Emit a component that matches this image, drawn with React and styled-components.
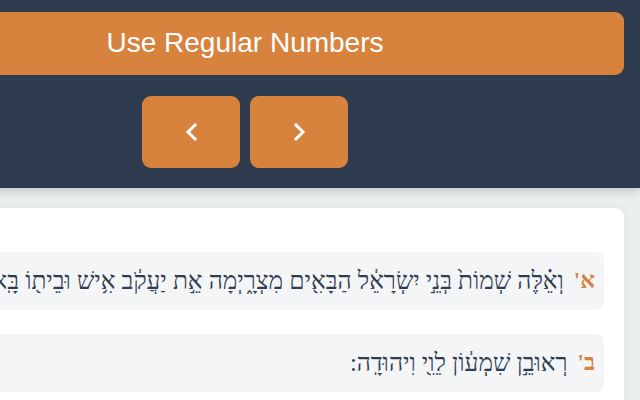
import React from 'react'
import styled, { createGlobalStyle } from 'styled-components'

const GlobalStyle = createGlobalStyle`
    html, body {
        margin: 0;
        padding: 0;
        direction: rtl;
        background: #eceff0;
        overflow: hidden;
    }
`

const Page = styled.div`
    width: 790px;
    height: 400px;
    overflow: hidden;
    background: #eceff0;
`

const Header = styled.header`
    background: #2f3c4f;
    padding: 12px 16px 20px;
    box-shadow: 0 3px 10px rgba(0, 0, 0, 0.18);
    position: relative;
`

const ModeButton = styled.button`
    display: block;
    width: 100%;
    height: 63px;
    border: none;
    border-radius: 9px;
    background: #d8833d;
    color: #fff;
    font-family: "Liberation Sans", Arial, sans-serif;
    font-size: 28px;
    direction: ltr;
    padding: 0 0 2px 0;
    cursor: pointer;
`

const Nav = styled.div`
    display: flex;
    justify-content: center;
    gap: 10px;
    margin-top: 21px;
`

const NavButton = styled.button`
    width: 98px;
    height: 72px;
    border: none;
    border-radius: 9px;
    background: #d8833d;
    display: flex;
    align-items: center;
    justify-content: center;
    cursor: pointer;
`

const Main = styled.main`
    padding: 20px 16px;
`

const Card = styled.section`
    background: #fff;
    border-radius: 9px;
    box-shadow: 0 0 12px rgba(0, 0, 0, 0.06);
    padding: 44px 20px 20px;
    display: flex;
    flex-direction: column;
    gap: 24px;
`

const Verse = styled.div`
    background: #f4f5f7;
    border-radius: 8px;
    height: 58px;
    padding: 0 9px;
    display: flex;
    align-items: center;
    gap: 10px;
    white-space: nowrap;
    overflow: hidden;
`

const VerseNum = styled.span`
    color: #d8833d;
    font-family: "Liberation Serif", "DejaVu Serif", serif;
    font-weight: bold;
    font-size: 23px;
`

const VerseText = styled.span`
    color: #2f3c4f;
    font-family: "Liberation Serif", "DejaVu Serif", serif;
    font-size: 24.5px;
`

function Chevron({ dir }) {
    const d = dir === 'left' ? 'M11 3 L4 10 L11 17' : 'M4 3 L11 10 L4 17'
    return (
        <svg width="15" height="20" viewBox="0 0 15 20">
            <path d={d} fill="none" stroke="#fff" strokeWidth="3" strokeLinecap="square" />
        </svg>
    )
}

const verses = [
    { num: "א'", text: 'וְאֵ֗לֶּה שְׁמוֹת֙ בְּנֵ֣י יִשְׂרָאֵ֔ל הַבָּאִ֖ים מִצְרָ֑יְמָה אֵ֣ת יַעֲקֹ֔ב אִ֥ישׁ וּבֵית֖וֹ בָּֽאוּ:' },
    { num: "ב'", text: 'רְאוּבֵ֣ן שִׁמְע֔וֹן לֵוִ֖י וִיהוּדָֽה:' },
]

export default function App() {
    return (
        <Page>
            <GlobalStyle />
            <Header>
                <ModeButton>Use Regular Numbers</ModeButton>
                <Nav>
                    <NavButton aria-label="next"><Chevron dir="right" /></NavButton>
                    <NavButton aria-label="previous"><Chevron dir="left" /></NavButton>
                </Nav>
            </Header>
            <Main>
                <Card>
                    {verses.map((v) => (
                        <Verse key={v.num}>
                            <VerseNum>{v.num}</VerseNum>
                            <VerseText>{v.text}</VerseText>
                        </Verse>
                    ))}
                </Card>
            </Main>
        </Page>
    )
}
